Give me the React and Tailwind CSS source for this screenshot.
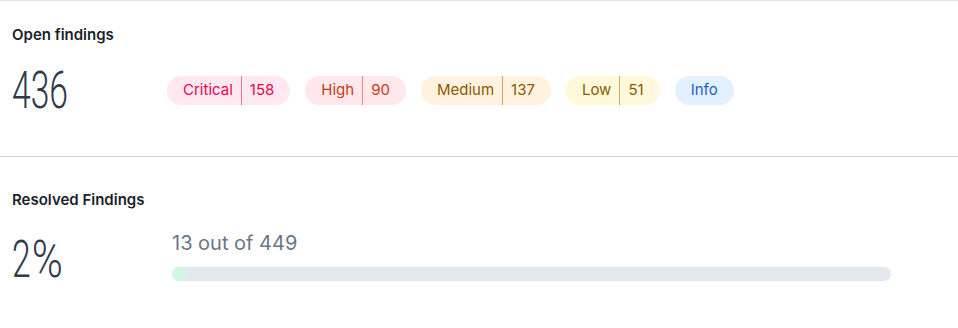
import React from 'react';

const badges = [
  { label: 'Critical', count: 158, bg: 'bg-[#ffe8ef]', text: 'text-[#e5074f]', line: 'bg-[#e8789a]' },
  { label: 'High', count: 90, bg: 'bg-[#ffe8eb]', text: 'text-[#c93a16]', line: 'bg-[#e58a7c]' },
  { label: 'Medium', count: 137, bg: 'bg-[#fff3e0]', text: 'text-[#8f5600]', line: 'bg-[#d1a66a]' },
  { label: 'Low', count: 51, bg: 'bg-[#fff8db]', text: 'text-[#8a5c00]', line: 'bg-[#cfac5f]' },
  { label: 'Info', bg: 'bg-[#e3f0ff]', text: 'text-[#1b5fc9]' },
];

function Badge({ b }) {
  return (
    <div className={`flex h-[29px] items-center rounded-full ${b.bg} ${b.text} text-[15px] font-[Inter,sans-serif]`}>
      <span className={b.count !== undefined ? 'pl-4 pr-2' : 'px-4'}>{b.label}</span>
      {b.count !== undefined && (
        <>
          <span className={`h-full w-px ${b.line}`} />
          <span className="pl-2 pr-4">{b.count}</span>
        </>
      )}
    </div>
  );
}

function BigNumber({ children }) {
  return (
    <div className="w-[160px] shrink-0">
      <span className="inline-block origin-left scale-x-[0.66] font-['Roboto',sans-serif] text-[51px] font-light leading-none text-[#2f3a4a]">
        {children}
      </span>
    </div>
  );
}

export default function App() {
  return (
    <div className="min-h-screen bg-white font-['Inter',sans-serif]">
      <div className="border-t border-b border-t-[#dce7f0] border-b-[#cdd6e0] px-3 pt-[23px] pb-[40px]">
        <h2 className="text-[15px] leading-[22px] font-semibold text-[#1a1f2b]">Open findings</h2>
        <div className="mt-[19px] flex items-center">
          <BigNumber>436</BigNumber>
          <div className="-ml-[5px] flex items-center gap-[15px]">
            {badges.map((b) => (
              <Badge key={b.label} b={b} />
            ))}
          </div>
        </div>
      </div>
      <div className="px-3 pt-[32px]">
        <h2 className="text-[15px] leading-[22px] font-semibold text-[#1a1f2b]">Resolved Findings</h2>
        <div className="mt-[23px] flex items-start">
          <BigNumber>
            2<span className="ml-[2px] inline-block origin-left scale-x-[1.25]">%</span>
          </BigNumber>
          <div className="-mt-px w-[719px]">
            <div className="text-[20px] leading-[20px] text-[#6b7686]">13 out of 449</div>
            <div className="mt-[14px] h-[14px] w-full rounded-full bg-[#e3e7ee]">
              <div className="h-[14px] w-[14px] rounded-full bg-[#d1f7e1]" />
            </div>
          </div>
        </div>
      </div>
    </div>
  );
}
